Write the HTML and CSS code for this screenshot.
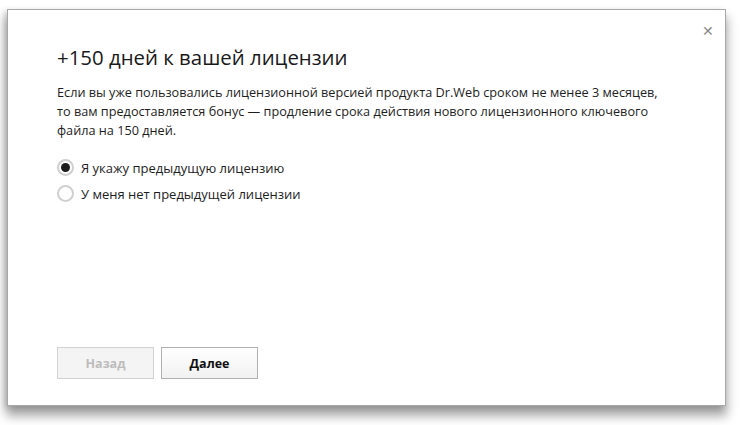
FILE: index.html
```html
<!DOCTYPE html>
<html lang="ru">
<head>
    <meta charset="UTF-8" />
    <title>+150 дней к вашей лицензии</title>
    <link rel="stylesheet" href="styles.css">
</head>
<body>
    <div class="dialog">
        <button class="close" title="Закрыть">&#x2715;</button>
        <div class="content">
            <h2>+150 дней к вашей лицензии</h2>
            <p class="text">Если вы уже пользовались лицензионной версией продукта Dr.Web сроком не менее 3 месяцев, то вам предоставляется бонус — продление срока действия нового лицензионного ключевого файла на 150 дней.</p>
            <div class="options">
                <label class="option">
                    <input type="radio" name="license" checked>
                    <span class="radio"></span>
                    Я укажу предыдущую лицензию
                </label>
                <label class="option">
                    <input type="radio" name="license">
                    <span class="radio"></span>
                    У меня нет предыдущей лицензии
                </label>
            </div>
        </div>
        <div class="footer">
            <button class="btn" disabled>Назад</button>
            <button class="btn primary">Далее</button>
        </div>
    </div>
</body>
</html>
```

FILE: styles.css
```css
html {
    background: #fff;
}

body {
    font-family: "Open Sans", "Noto Sans", sans-serif;
    margin: 0;
    padding: 9px 0 20px 7px;
    color: #222;
}

.dialog {
    position: relative;
    box-sizing: border-box;
    width: 719px;
    height: 397px;
    border: 1px solid #a8a8a8;
    background: #fff;
    box-shadow: 0 9px 10px 1px rgba(0, 0, 0, 0.35), -3px 2px 6px rgba(0, 0, 0, 0.15);
    display: flex;
    flex-direction: column;
    padding: 0 0 26px 49px;
}

.close {
    position: absolute;
    top: 9px;
    right: 7px;
    border: none;
    background: none;
    color: #8a8a8a;
    font-size: 14px;
    padding: 4px;
    cursor: pointer;
}

.content h2 {
    font-weight: normal;
    font-size: 20.4px;
    margin: 33px 0 0 0;
    color: #1a1a1a;
}

.text {
    font-size: 12.7px;
    line-height: 19px;
    margin: 12px 0 0 0;
    width: 612px;
    color: #1e1e1e;
}

.options {
    margin-top: 18px;
    display: flex;
    flex-direction: column;
    gap: 7px;
}

.option {
    display: flex;
    align-items: center;
    gap: 7px;
    font-size: 13px;
    color: #1e1e1e;
    height: 19px;
}

.option input {
    display: none;
}

.radio {
    box-sizing: border-box;
    width: 17px;
    height: 17px;
    border-radius: 50%;
    border: 2px solid #cfcfcf;
    background: #fff;
    display: flex;
    align-items: center;
    justify-content: center;
}

.option input:checked + .radio::after {
    content: "";
    width: 9px;
    height: 9px;
    border-radius: 50%;
    background: #1c1c1c;
}

.footer {
    margin-top: auto;
    display: flex;
    gap: 7px;
}

.btn {
    box-sizing: border-box;
    width: 97px;
    height: 32px;
    font-family: inherit;
    font-size: 12.5px;
    border: 1px solid #b0b0b0;
    background: linear-gradient(#ffffff, #f1f1f1);
    color: #111;
    font-weight: bold;
}

.btn:disabled {
    background: #f4f4f4;
    border-color: #d2d2d2;
    color: #bcbcbc;
}
```
